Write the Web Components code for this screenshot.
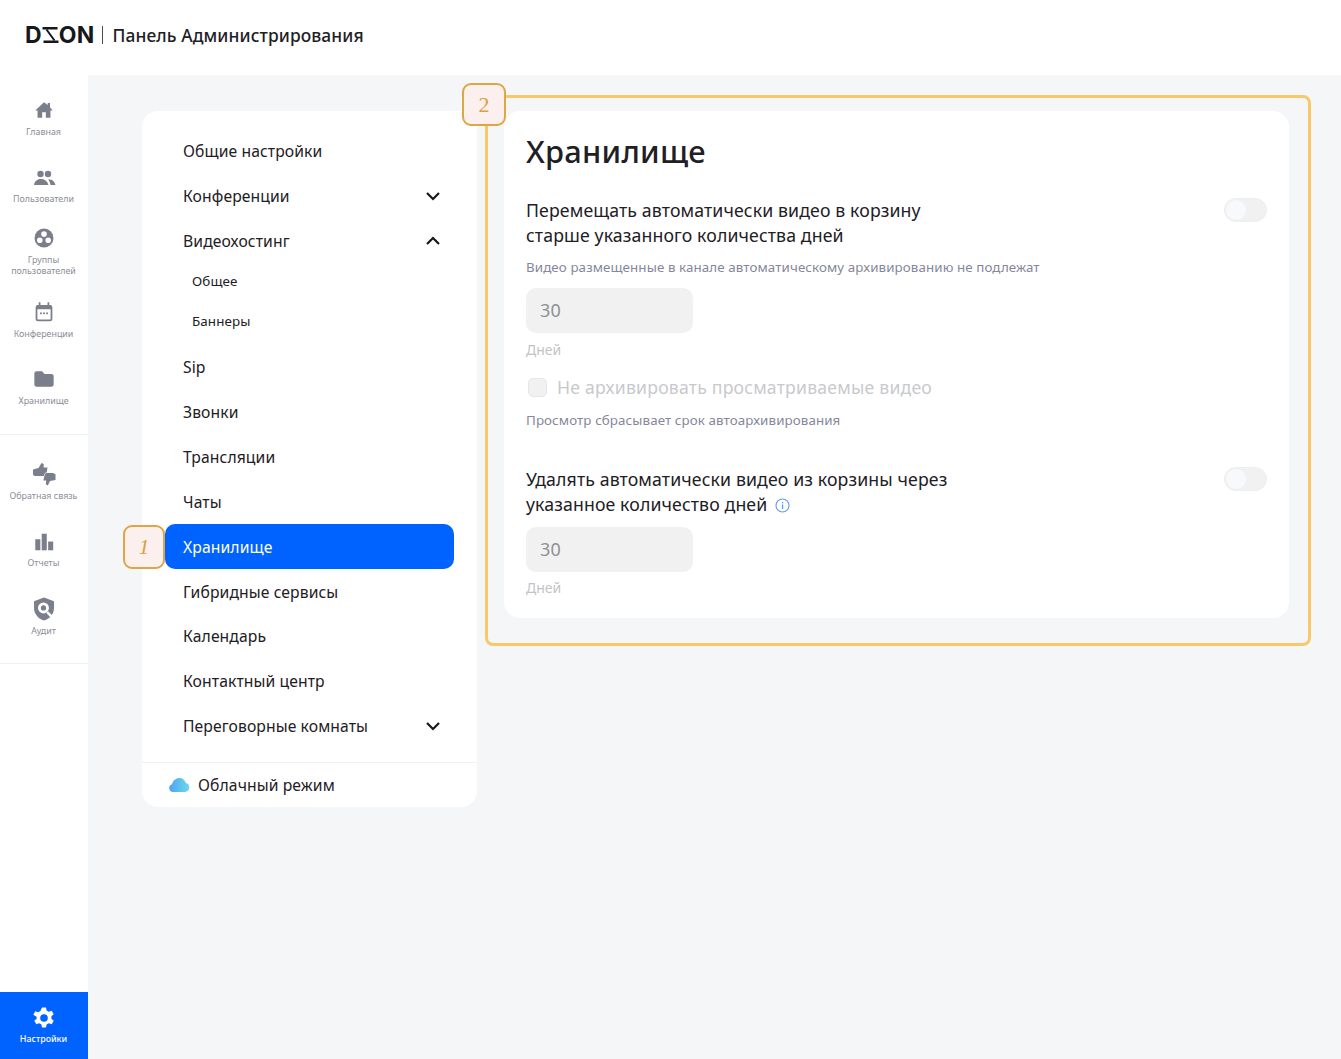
<!DOCTYPE html>
<html lang="ru"><head><meta charset="utf-8"><title>Панель Администрирования</title>
<style>
html,body{margin:0;padding:0;background:#f5f6f8}
body{font-family:"Noto Sans",sans-serif;color:#1e2024;width:1341px;height:1059px;overflow:hidden}
</style></head><body>
<app-shell></app-shell>
<script>
const ICONS={
home:'<path d="M12 3.500 2.500 12.500h2.500V20.500h5v-6h4v6h5v-8h2.500L18.500 9V4.500h-2.500v2.200z"/>',
users:'<circle cx="8.500" cy="8" r="3.200"/><circle cx="16" cy="8" r="3.200"/><path d="M2 19c.5-3.500 3-6 7-6s6.500 2.500 7.500 6zM18.500 19c-.3-2-1-3.800-2.400-5.400 3.400-.8 6.400 1 7.400 5.400z"/>',
groups:'<path fill-rule="evenodd" d="M12 2.500a9.500 9.500 0 1 0 0 19 9.500 9.500 0 0 0 0-19zm0 2.800a2.800 2.800 0 1 1 0 5.600 2.800 2.800 0 0 1 0-5.600zM7.800 11.500a2.800 2.800 0 1 1 0 5.600 2.800 2.800 0 0 1 0-5.600zm8.400 0a2.800 2.800 0 1 1 0 5.600 2.800 2.800 0 0 1 0-5.600z"/>',
cal:'<path fill-rule="evenodd" d="M6 1h2v3h8V1h2v3h1a2.500 2.500 0 0 1 2.500 2.500V20a2.500 2.500 0 0 1-2.500 2.500H5A2.500 2.500 0 0 1 2.500 20V6.500A2.500 2.500 0 0 1 5 4h1zM4.500 9v11c0 .3.200.5.500.5h14c.3 0 .5-.2.5-.5V9z"/><rect x="7.500" y="12.500" width="2" height="2"/><rect x="11" y="12.500" width="2" height="2"/><rect x="14.500" y="12.500" width="2" height="2"/>',
folder:'<path d="M4 3.500h6l2.500 3H20a2.500 2.500 0 0 1 2.500 2.500v9A2.500 2.500 0 0 1 20 20.500H4A2.500 2.500 0 0 1 1.500 18V6A2.500 2.500 0 0 1 4 3.500z"/>',
thumbs:'<path d="M1 7.500l5.500-1.500L9.500 1l2.200 1v3.500h3.800L14.500 12l-2 2H3l-2-1z"/><path d="M14 11h7l2.500 1.200V18l-5.500 1-2.200 4.500-2-1.200.4-3.800h-2.900l1.500-6z" stroke="#fff" stroke-width="1.200" paint-order="stroke"/>',
bars:'<rect x="2.500" y="9" width="5.500" height="12"/><rect x="9.500" y="3" width="5.500" height="18"/><rect x="16.500" y="11.500" width="5.500" height="9.500"/>',
shield:'<path d="M12 1 2.500 4.500V11c0 5.500 4 10.500 9.500 12 5.500-1.500 9.500-6.500 9.500-12V4.500z"/><circle cx="11.500" cy="11" r="5.200" fill="#fff"/><circle cx="11.500" cy="11" r="2.500"/><path d="M15 15l4 4" stroke="#fff" stroke-width="2.400"/>',
gear:'<path fill-rule="evenodd" d="M10 1.500h4l.6 3 2.200 1.200 2.900-1 2 3.500-2.300 2 0 2.500 2.300 2-2 3.500-2.900-1-2.200 1.200-.6 3h-4l-.6-3-2.200-1.200-2.900 1-2-3.500 2.300-2V10.700L1.300 8.700l2-3.500 2.900 1 2.200-1.200zM12 8.200a3.800 3.800 0 1 0 0 7.600 3.800 3.800 0 0 0 0-7.600z"/>'
};

class NavItem extends HTMLElement{
  constructor(){super();this.attachShadow({mode:'open'}).innerHTML=`<style>
  :host{display:flex;flex-direction:column;align-items:center;width:88px;color:#8b8d99;font-size:8.900px;line-height:11px;text-align:center}
  svg{width:24px;height:24px;fill:#7b7e8b;display:block;flex:none;margin-right:1px;transform:scale(var(--s,1))}
  .l{margin-top:var(--gap,7px);margin-right:1px}
  :host([active]){color:#fff;font-weight:500;background:#0062ff;height:67px;justify-content:flex-start;padding-top:14px;box-sizing:border-box}
  :host([active]) svg{fill:#fff}
  </style><svg viewBox="0 0 24 24">${ICONS[this.getAttribute('icon')]}</svg><div class="l"><slot></slot></div>`;}
}
customElements.define('nav-item',NavItem);

class SideBar extends HTMLElement{
  constructor(){super();this.attachShadow({mode:'open'}).innerHTML=`<style>
  :host{display:flex;flex-direction:column;width:88px;background:#fff;flex:none;height:984px}
  .g{display:flex;flex-direction:column;border-bottom:1px solid #eef0f3}
  .a{height:360px;padding-top:23px;box-sizing:border-box}
  .b{height:229px;padding-top:27px;box-sizing:border-box}
  .s{flex:1}
  </style><div class="g a"><slot name="a"></slot></div><div class="g b"><slot name="b"></slot></div><div class="s"></div><slot name="c"></slot>`;}
}
customElements.define('side-bar',SideBar);

class MenuRow extends HTMLElement{
  constructor(){super();
  const c=this.getAttribute('chev');
  const chev=c?`<svg viewBox="0 0 16 10" style="transform:${c==='up'?'rotate(180deg)':'none'}"><path d="M2 2l6 6 6-6" fill="none" stroke="#16181c" stroke-width="2.200"/></svg>`:'';
  this.attachShadow({mode:'open'}).innerHTML=`<style>
  :host{display:flex;align-items:center;justify-content:space-between;height:45px;margin:0 23px;padding:0 13px 0 18px;font-size:15.700px;color:#1e2024;box-sizing:border-box;border-radius:10px;letter-spacing:.1px}
  :host([sub]){height:40px;padding-left:27px;font-size:13.400px}
  :host([active]){background:#0062ff;color:#fff;height:44.500px;margin-bottom:.5px;padding-top:1px}
  svg{width:16px;height:10px;display:block}
  </style><span><slot></slot></span>${chev}`;}
}
customElements.define('menu-row',MenuRow);

class SettingsMenu extends HTMLElement{
  constructor(){super();this.attachShadow({mode:'open'}).innerHTML=`<style>
  :host{display:block;width:335px;height:696px;background:#fff;border-radius:16px;box-sizing:border-box;padding-top:18px;flex:none;position:relative}
  .list{height:633px;margin-top:-1px;padding-bottom:1px}
  .foot{border-top:1px solid #f0f1f4;height:44px;display:flex;align-items:center;padding-left:26px;gap:8px;font-size:15.700px;letter-spacing:.1px}
  svg{width:22px;height:16px}
  </style><div class="list"><slot></slot></div><div class="foot"><svg viewBox="0 0 22 16"><defs><linearGradient id="g" x1="0" x2="1"><stop offset="0" stop-color="#4ea2f5"/><stop offset="1" stop-color="#6ed9ea"/></linearGradient></defs><path fill="url(#g)" d="M5 15a4 4 0 0 1-1-7.800C5 3.500 8 1 11.500 1c3 0 5.500 2 6.300 5A4.600 4.600 0 0 1 17.500 15z"/></svg><span>Облачный режим</span></div>`;}
}
customElements.define('settings-menu',SettingsMenu);

class ToggleSwitch extends HTMLElement{
  constructor(){super();this.attachShadow({mode:'open'}).innerHTML=`<style>
  :host{display:block;width:43px;height:24px;border-radius:12px;background:#f1f1f2;border:1px solid #eeeeef;box-sizing:border-box;flex:none;position:relative}
  i{position:absolute;left:1px;top:1px;width:20px;height:20px;border-radius:50%;background:#f8f9fc}
  </style><i></i>`;}
}
customElements.define('toggle-switch',ToggleSwitch);

class NumField extends HTMLElement{
  constructor(){super();this.attachShadow({mode:'open'}).innerHTML=`<style>
  :host{display:flex;align-items:center;width:167px;height:45px;background:#f1f1f2;border-radius:10px;padding:0 0 2px 14px;box-sizing:border-box;font-size:18px;color:#8f9094;letter-spacing:.3px}
  </style><slot></slot>`;}
}
customElements.define('num-field',NumField);

class CalloutBadge extends HTMLElement{
  constructor(){super();this.attachShadow({mode:'open'}).innerHTML=`<style>
  :host{position:absolute;display:flex;align-items:center;justify-content:center;background:#fbf0ee;border:2px solid #dfa646;border-radius:9px;box-sizing:border-box;color:#dca040;font-family:"Liberation Serif",serif;font-size:22px;font-style:italic;font-weight:400;z-index:3}
  </style><slot></slot>`;}
}
customElements.define('callout-badge',CalloutBadge);

class StoragePanel extends HTMLElement{
  constructor(){super();this.attachShadow({mode:'open'}).innerHTML=`<style>
  :host{display:block;width:785px;height:507px;background:#fff;border-radius:16px;box-sizing:border-box;padding:19px 22px 0;flex:none}
  h1{margin:0;font-size:30.800px;line-height:42px;font-weight:500;letter-spacing:.25px;color:#1e2024}
  .row{display:flex;justify-content:space-between;align-items:flex-start}
  .t{font-size:17.700px;line-height:25px;letter-spacing:.12px;font-weight:400}
  .h{font-size:13.350px;line-height:18px;color:#85879a;letter-spacing:.1px}
  .u{font-size:14px;line-height:20px;color:#c3c4c8}
  .chk{display:flex;align-items:center;gap:10px;font-size:17.600px;line-height:24px;color:#c8c9cd;letter-spacing:.22px;margin-left:2px}
  .box{width:19px;height:19px;border-radius:5px;background:#f1f1f2;border:1px solid #e6e6e8;box-sizing:border-box}
  .info{display:inline-block;vertical-align:-2px;margin-left:3px}
  </style>
  <h1>Хранилище</h1>
  <div class="row" style="margin-top:26px"><div class="t">Перемещать автоматически видео в корзину<br>старше указанного количества дней</div><toggle-switch></toggle-switch></div>
  <div class="h" style="margin-top:10px">Видео размещенные в канале автоматическому архивированию не подлежат</div>
  <num-field style="margin-top:12px">30</num-field>
  <div class="u" style="margin-top:7px">Дней</div>
  <div class="chk" style="margin-top:15px"><span class="box"></span><span>Не архивировать просматриваемые видео</span></div>
  <div class="h" style="margin-top:12px">Просмотр сбрасывает срок автоархивирования</div>
  <div class="row" style="margin-top:38px"><div class="t">Удалять автоматически видео из корзины через<br>указанное количество дней <svg class="info" width="15" height="15" viewBox="0 0 15 15"><circle cx="7.500" cy="7.500" r="6.500" fill="none" stroke="#5b9bf5" stroke-width="1.100"/><rect x="6.900" y="6.500" width="1.300" height="4.500" fill="#5b9bf5"/><rect x="6.900" y="4" width="1.300" height="1.400" fill="#5b9bf5"/></svg></div><toggle-switch></toggle-switch></div>
  <num-field style="margin-top:10px">30</num-field>
  <div class="u" style="margin-top:6px">Дней</div>`;}
}
customElements.define('storage-panel',StoragePanel);

class TopBar extends HTMLElement{
  constructor(){super();this.attachShadow({mode:'open'}).innerHTML=`<style>
  :host{display:flex;align-items:center;height:75px;background:#fff;padding:0 0 6px 25px;box-sizing:border-box;color:#1e2024}
  .logo{display:flex;align-items:center;font-family:"Inter",sans-serif;font-weight:700;font-size:23px;line-height:24px;letter-spacing:.2px;color:#16181c}
  .logo svg{width:17px;height:16px;margin:0;display:block}
  .sep{width:1px;height:18px;background:#4a4c52;margin:0 9px 0 8px}
  .ttl{font-size:17.400px;font-weight:500;letter-spacing:.1px}
  </style><div class="logo"><span>D</span><svg viewBox="0 0 17 16" fill="none" stroke="#16181c"><path d="M.5 1.200h15M1.500 14.800h15" stroke-width="2.400"/><path d="M4.500 2.500C7 6 10 10 12.500 13.500" stroke-width="2"/></svg><span>ON</span></div><div class="sep"></div><div class="ttl">Панель Администрирования</div>`;}
}
customElements.define('top-bar',TopBar);

class AppShell extends HTMLElement{
  constructor(){super();this.attachShadow({mode:'open'}).innerHTML=`<style>
  :host{display:block;position:relative;width:1341px;height:1059px;background:#f5f6f8}
  .main{display:flex;align-items:flex-start}
  .work{display:flex;align-items:flex-start;gap:27px;padding:36px 0 0 54px}
  .hl{position:absolute;left:485px;top:95px;width:826px;height:551px;border:3px solid #f8c96b;border-radius:8px;box-sizing:border-box;pointer-events:none;z-index:2}
  </style>
  <top-bar></top-bar>
  <div class="main">
    <side-bar>
      <nav-item slot="a" icon="home" style="--gap:4px;--s:.92">Главная</nav-item>
      <nav-item slot="a" icon="users" style="margin-top:29px;--gap:3px">Пользователи</nav-item>
      <nav-item slot="a" icon="groups" style="margin-top:22px;--gap:4px">Группы<br>пользователей</nav-item>
      <nav-item slot="a" icon="cal" style="margin-top:24px;--gap:4px;--s:.88">Конференции</nav-item>
      <nav-item slot="a" icon="folder" style="margin-top:28px;--gap:4px;--s:.92">Хранилище</nav-item>
      <nav-item slot="b" icon="thumbs" style="--gap:4px">Обратная связь</nav-item>
      <nav-item slot="b" icon="bars" style="margin-top:29px;--gap:3px;--s:.92">Отчеты</nav-item>
      <nav-item slot="b" icon="shield" style="margin-top:29px;--gap:4px;--s:1.05">Аудит</nav-item>
      <nav-item slot="c" icon="gear" active style="--gap:3px">Настройки</nav-item>
    </side-bar>
    <div class="work">
      <settings-menu>
        <menu-row>Общие настройки</menu-row>
        <menu-row chev="down">Конференции</menu-row>
        <menu-row chev="up">Видеохостинг</menu-row>
        <menu-row sub style="margin-top:-2px">Общее</menu-row>
        <menu-row sub style="margin-bottom:3px">Баннеры</menu-row>
        <menu-row>Sip</menu-row>
        <menu-row>Звонки</menu-row>
        <menu-row>Трансляции</menu-row>
        <menu-row>Чаты</menu-row>
        <menu-row active>Хранилище</menu-row>
        <menu-row>Гибридные сервисы</menu-row>
        <menu-row style="margin-top:-1px">Календарь</menu-row>
        <menu-row>Контактный центр</menu-row>
        <menu-row chev="down">Переговорные комнаты</menu-row>
      </settings-menu>
      <storage-panel></storage-panel>
    </div>
  </div>
  <div class="hl"></div>
  <callout-badge style="left:123px;top:525px;width:42px;height:44px">1</callout-badge>
  <callout-badge style="left:462px;top:83px;width:44px;height:43px;font-style:normal">2</callout-badge>`;}
}
customElements.define('app-shell',AppShell);
</script>
</body></html>
